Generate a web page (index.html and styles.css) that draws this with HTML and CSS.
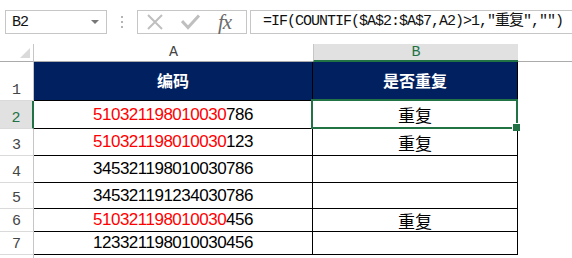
FILE: index.html
```html
<!DOCTYPE html>
<html lang="zh-CN">

<head>
    <meta charset="UTF-8">
    <title>重复判断</title>
    <link rel="stylesheet" href="styles.css">
</head>

<body>
    <div class="formula-bar">
        <div class="name-box">
            <span class="name">B2</span>
            <span class="arrow"></span>
        </div>
        <div class="grip"><i></i><i></i><i></i></div>
        <div class="fx-box">
            <svg class="icon-x" width="18" height="18" viewBox="0 0 18 18">
                <path d="M2 2 L16 16 M16 2 L2 16" stroke="#bfbfbf" stroke-width="2" fill="none" />
            </svg>
            <svg class="icon-ok" width="20" height="16" viewBox="0 0 20 16">
                <path d="M1 7 L7 13.5 L18 1.5" stroke="#bfbfbf" stroke-width="3" fill="none" />
            </svg>
            <span class="fx">fx</span>
        </div>
        <div class="formula">=IF(COUNTIF($A$2:$A$7,A2)&gt;1,"<span class="cjk">重复</span>","")</div>
    </div>

    <div class="sheet">
        <div class="corner"><span class="tri"></span></div>
        <div class="col-head">A</div>
        <div class="col-head col-sel">B</div>
        <div class="col-head col-rest"></div>

        <div class="row-head">1</div>
        <div class="cell title">编码</div>
        <div class="cell title">是否重复</div>
        <div class="empty"></div>

        <div class="row-head row-sel">2</div>
        <div class="cell num"><span class="red">510321198010030</span>786</div>
        <div class="cell dup active">重复</div>
        <div class="empty"></div>

        <div class="row-head">3</div>
        <div class="cell num"><span class="red">510321198010030</span>123</div>
        <div class="cell dup">重复</div>
        <div class="empty"></div>

        <div class="row-head">4</div>
        <div class="cell num">345321198010030786</div>
        <div class="cell dup"></div>
        <div class="empty"></div>

        <div class="row-head">5</div>
        <div class="cell num">345321191234030786</div>
        <div class="cell dup"></div>
        <div class="empty"></div>

        <div class="row-head">6</div>
        <div class="cell num"><span class="red">510321198010030</span>456</div>
        <div class="cell dup">重复</div>
        <div class="empty"></div>

        <div class="row-head">7</div>
        <div class="cell num">123321198010030456</div>
        <div class="cell dup"></div>
        <div class="empty"></div>

        <div class="row-head"></div>
        <div class="empty"></div>
        <div class="empty"></div>
        <div class="empty"></div>
    </div>
</body>

</html>
```

FILE: styles.css
```css
* {
    margin: 0;
    padding: 0;
    box-sizing: border-box;
}

body {
    width: 572px;
    height: 258px;
    overflow: hidden;
    background: #fff;
    font-family: "Liberation Sans", "Noto Sans CJK SC", sans-serif;
}

/* 编辑栏 */
.formula-bar {
    display: flex;
    align-items: center;
    height: 24px;
    margin-top: 10px;
}

.name-box {
    width: 102px;
    height: 24px;
    margin-left: 5px;
    border: 1px solid #c6c6c6;
    display: flex;
    align-items: center;
    justify-content: space-between;
    padding: 0 7px 0 6px;
}

.name {
    font-family: "Liberation Mono", monospace;
    font-size: 15px;
    letter-spacing: -1px;
    color: #111;
}

.arrow {
    width: 0;
    height: 0;
    border-left: 4px solid transparent;
    border-right: 4px solid transparent;
    border-top: 4px solid #777;
}

.grip {
    margin-left: 14px;
    width: 2px;
    display: flex;
    flex-direction: column;
    gap: 3px;
}

.grip i {
    display: block;
    width: 2px;
    height: 2px;
    background: #b4b4b4;
}

.fx-box {
    width: 110px;
    height: 24px;
    margin-left: 14px;
    border: 1px solid #c6c6c6;
    display: flex;
    align-items: center;
    padding-left: 8px;
}

.icon-ok {
    margin-left: 17px;
}

.fx {
    margin-left: 17px;
    font-family: "Liberation Serif", serif;
    font-style: italic;
    font-size: 21px;
    color: #6b6b6b;
    letter-spacing: -1px;
}

.formula {
    flex: 1;
    height: 24px;
    margin-left: 3px;
    margin-right: -10px;
    border: 1px solid #c6c6c6;
    padding-left: 12px;
    font-family: "Liberation Mono", "Noto Sans CJK SC", monospace;
    font-size: 15px;
    letter-spacing: -1px;
    line-height: 22px;
    color: #111;
    white-space: nowrap;
}

/* 表格 */
.sheet {
    margin-top: 10px;
    display: grid;
    grid-template-columns: 34px 279px 205px 1fr;
    grid-template-rows: 18px 39px 28px 27px 27px 26px 23px 23px 10px;
}

.corner {
    position: relative;
    border-right: 1px solid #c6c6c6;
    border-bottom: 1px solid #ababab;
}

.corner .tri {
    position: absolute;
    right: 3px;
    bottom: 3px;
    width: 0;
    height: 0;
    border-left: 10px solid transparent;
    border-bottom: 10px solid #dadada;
}

.col-head {
    border-bottom: 1px solid #ababab;
    font-family: "Liberation Mono", monospace;
    font-size: 15px;
    color: #444;
    text-align: center;
    line-height: 18px;
}

.col-sel {
    background: #e1e1e1;
    border-left: 1px solid #c6c6c6;
    border-bottom: 2px solid #217346;
    color: #217346;
}

.row-head {
    border-right: 1px solid #c6c6c6;
    border-bottom: 1px solid #dadada;
    font-family: "Liberation Mono", monospace;
    font-size: 15px;
    color: #444;
    text-align: center;
    display: flex;
    align-items: flex-end;
    justify-content: center;
    padding-bottom: 1px;
}

.row-sel {
    background: #e1e1e1;
    border-right: 2px solid #217346;
    color: #217346;
}

.cell {
    border-right: 1px solid #000;
    border-bottom: 1px solid #000;
    display: flex;
    align-items: center;
    justify-content: center;
    color: #000;
}

.title {
    background: #002060;
    color: #fff;
    font-family: "Noto Sans CJK SC", sans-serif;
    font-weight: bold;
    font-size: 16px;
    padding-bottom: 2px;
}

.num {
    font-size: 17px;
    letter-spacing: -0.5px;
}

.red {
    color: #f00;
}

.dup {
    font-family: "Noto Sans CJK SC", sans-serif;
    font-size: 17px;
}

.active {
    position: relative;
}

.active::after {
    content: "";
    position: absolute;
    left: -2px;
    top: -2px;
    right: -1px;
    bottom: -1px;
    border: 2px solid #217346;
}

.active::before {
    content: "";
    position: absolute;
    right: -3px;
    bottom: -3px;
    width: 7px;
    height: 7px;
    background: #217346;
    border: 1px solid #fff;
    border-right: 0;
    border-bottom: 0;
    z-index: 1;
}
```
